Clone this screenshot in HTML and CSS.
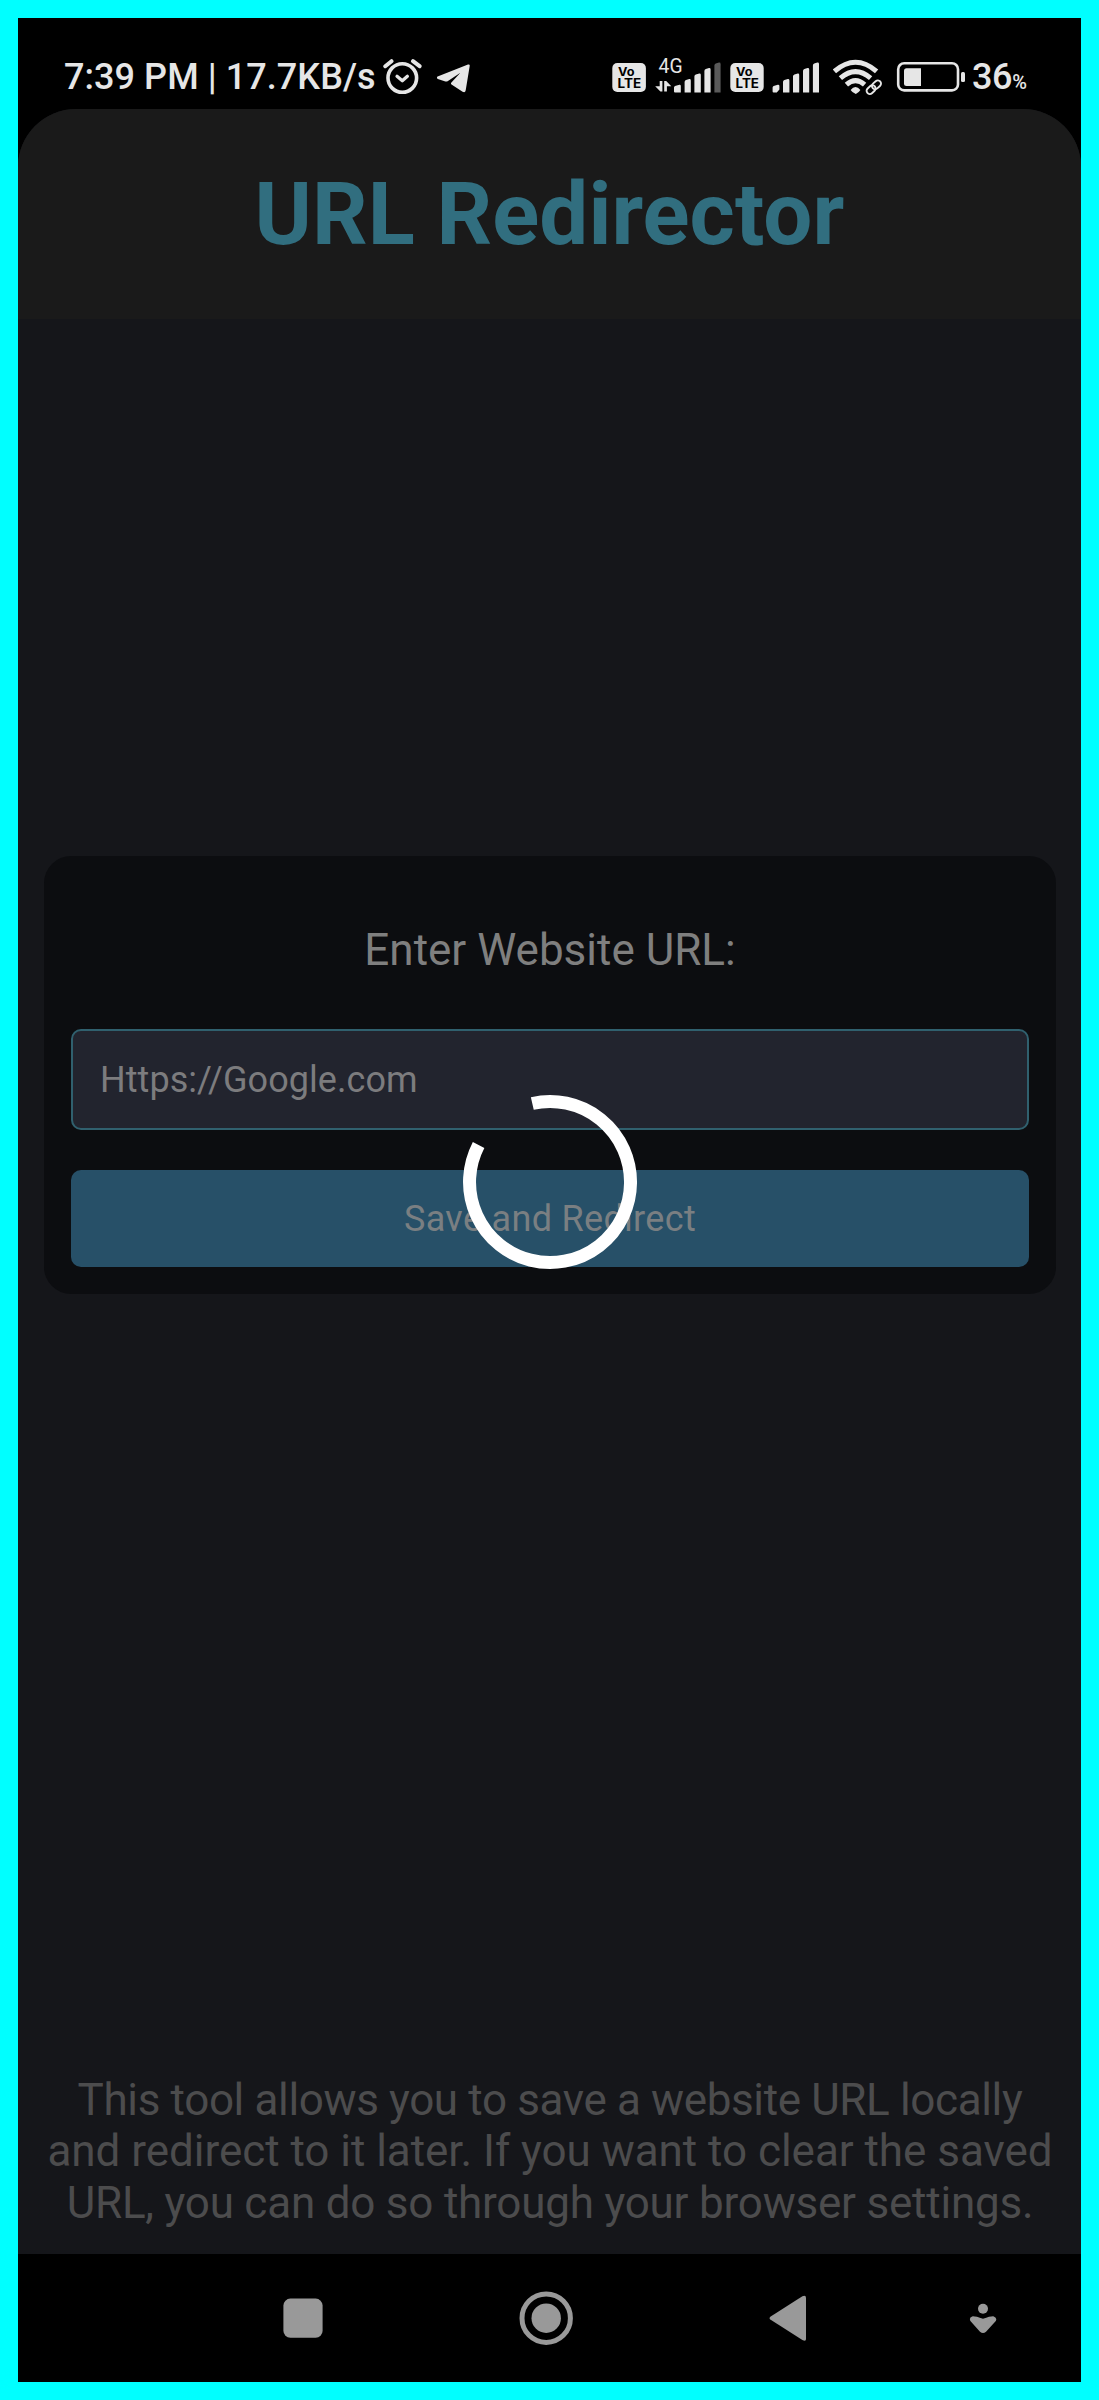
FILE: index.html
```html
<!DOCTYPE html>
<html lang="en">
<head>
<meta charset="utf-8">
<title>URL Redirector</title>
<link rel="stylesheet" href="styles.css">
</head>
<body>
<div class="screen">
  <div class="status">
    <div class="status-group">
      <span class="clock">7:39 PM | 17.7KB/s</span>
      <svg class="icon alarm" width="40" height="40" viewBox="382 56 40 40" fill="none" stroke="currentColor" stroke-linecap="round">
        <circle cx="402.3" cy="78" r="14.3" stroke-width="3.6"/>
        <path d="M385.3 66.2L391.5 61.2M413 61.2L419.6 66.2" stroke-width="4"/>
        <path d="M397 76.2L402.3 80.8L407.4 76.2" stroke-width="3.2" stroke-linejoin="round"/>
      </svg>
      <svg class="icon" width="34" height="40" viewBox="437 56 34 40" fill="currentColor">
        <path d="M437.6 76.6L468 64.6Q470 64 469.7 66L465.7 90.3Q465.2 93.2 462.6 91.8L451.5 84.6Q450.4 83.6 451.4 82.5L460.4 72.8L447.6 81.2Q446.6 81.8 445.4 81.4L437.8 79Q435.8 77.8 437.6 76.6Z"/>
      </svg>
    </div>
    <div class="status-group">
      <svg class="icon" width="34" height="40" viewBox="612 56 34 40">
        <rect x="612.3" y="63" width="33.6" height="29" rx="5" fill="currentColor"/>
        <text class="volte" x="618" y="75.8" font-size="11.5" textLength="16.5" lengthAdjust="spacingAndGlyphs">Vo</text>
        <text class="volte" x="617.6" y="88.3" font-size="13" textLength="23.6" lengthAdjust="spacingAndGlyphs">LTE</text>
      </svg>
      <svg class="icon signal-data" width="67" height="40" viewBox="655 56 67 40" fill="currentColor">
        <text class="network" x="658.6" y="72.7" font-size="19.5" textLength="24" lengthAdjust="spacingAndGlyphs">4G</text>
        <path d="M659.7 81H662.4V91.4H660.4L655.2 86.2H659.7ZM664.2 81H666.2L671.3 86.2H666.9V91.4H664.2Z"/>
        <path d="M674 87.5Q674 86.5 675 86L679.4 84.8Q680.8 84.6 680.8 86V92.5H675Q674 92.5 674 91.5ZM684.6 82Q684.6 80.6 686 80L689.3 79Q690.8 78.8 690.8 80.4V92.5H684.6ZM694.4 76.4Q694.4 75 695.8 74.5L699.3 73.4Q700.8 73.2 700.8 74.8V92.5H694.4ZM704.4 71Q704.4 69.6 705.8 69L709 68Q710.6 67.8 710.6 69.4V92.5H704.4Z"/>
        <path class="bar-off" d="M714.4 65.5Q714.4 64.2 715.8 63.6L719 62.6Q720.6 62.4 720.6 64V92.5H714.4Z"/>
      </svg>
      <svg class="icon" width="34" height="40" viewBox="729.6 56 34 40">
        <rect x="729.9" y="63" width="33.4" height="29" rx="5" fill="currentColor"/>
        <text class="volte" x="735.6" y="75.8" font-size="11.5" textLength="16.5" lengthAdjust="spacingAndGlyphs">Vo</text>
        <text class="volte" x="735.2" y="88.3" font-size="13" textLength="23.4" lengthAdjust="spacingAndGlyphs">LTE</text>
      </svg>
      <svg class="icon signal" width="48" height="40" viewBox="772 56 48 40" fill="currentColor">
        <path d="M772.6 87.5Q772.6 86.5 773.6 86L777.8 84.8Q779.4 84.6 779.4 86V89.6L776.8 92.5H773.6Q772.6 92.5 772.6 91.5ZM783 82Q783 80.6 784.4 80L787.8 79Q789.4 78.8 789.4 80.4V92.5H783ZM793 76.4Q793 75 794.4 74.5L797.8 73.4Q799.2 73.2 799.2 74.8V92.5H793ZM803 71Q803 69.6 804.4 69L807.6 68Q809.2 67.8 809.2 69.4V92.5H803ZM812.9 65.5Q812.9 64.2 814.2 63.6L817.4 62.6Q819 62.4 819 64V92.5H812.9Z"/>
      </svg>
      <svg class="icon wifi" width="50" height="40" viewBox="833 56 50 40" fill="none" stroke="currentColor">
        <path d="M834.4 71.3Q855.5 53.2 876.6 71.3M840.4 78.2Q855.5 65 870.6 78.2M846.4 84.6Q855.5 76.6 864.6 84.6" stroke-width="5"/>
        <path d="M850.6 90Q855.5 84 860.4 90Q859 92.4 855.8 94Q852 92.4 850.6 90Z" fill="currentColor" stroke="none"/>
        <g stroke-width="1.9" transform="rotate(-42 873.8 87.2)">
          <rect x="865.2" y="84" width="10" height="6.4" rx="3.2"/>
          <rect x="872.4" y="84" width="10" height="6.4" rx="3.2"/>
        </g>
      </svg>
      <svg class="icon battery" width="70" height="40" viewBox="896 56 70 40" fill="currentColor">
        <rect x="898.2" y="63.2" width="59.8" height="27.2" rx="6" fill="none" stroke="currentColor" stroke-width="2.6"/>
        <path d="M906.5 68.2H921V86H906.5Q904 86 904 83.5V70.7Q904 68.2 906.5 68.2Z"/>
        <rect x="961" y="72" width="4" height="10" rx="1.5"/>
      </svg>
      <span class="level">36<small class="percent">%</small></span>
    </div>
  </div>

  <div class="app">
    <header class="header"><h1 class="title">URL Redirector</h1></header>
    <main class="main">
      <form class="card">
        <label class="label" for="url">Enter Website URL:</label>
        <input class="field" id="url" type="text" placeholder="Https://Google.com">
        <button class="save" type="button">Save and Redirect</button>
      </form>
      <p class="note">
        <span class="line line-tight">This tool allows you to save a website URL locally</span>
        <span class="line">and redirect to it later. If you want to clear the saved</span>
        <span class="line line-snug">URL, you can do so through your browser settings.</span>
      </p>
    </main>
    <svg class="spinner" width="176" height="176" viewBox="-88 -88 176 176" fill="none" stroke="#fff" stroke-width="13">
      <path d="M-17.7 -78.5A80.5 80.5 0 1 1 -71.4 -37.1"/>
    </svg>
  </div>

  <nav class="nav">
    <svg width="40" height="60" viewBox="283 2288 40 60" fill="currentColor"><rect x="283.4" y="2298.6" width="39.2" height="39.2" rx="7"/></svg>
    <svg width="54" height="60" viewBox="519 2288 54 60"><circle cx="546.2" cy="2318.2" r="24.2" fill="none" stroke="currentColor" stroke-width="5"/><circle cx="546.2" cy="2318.2" r="14.7" fill="currentColor"/></svg>
    <svg width="38" height="60" viewBox="769 2288 38 60" fill="currentColor"><path d="M770.3 2316.8L802.4 2296.3Q806 2294.6 806 2298V2339Q806 2342 802.4 2340L770.3 2319.5Q768.8 2318.2 770.3 2316.8Z"/></svg>
    <svg width="28" height="60" viewBox="969 2288 28 60" fill="currentColor"><circle cx="983" cy="2308.8" r="5"/><path d="M972.2 2316.4Q975 2316 983 2318.8Q991 2316 993.8 2316.4Q997.4 2318 995.8 2321L986 2331.8Q983 2334.2 980 2331.8L970.4 2321Q968.8 2317.6 972.2 2316.4Z"/></svg>
  </nav>
</div>
</body>
</html>
```
FILE: styles.css
```css
* { box-sizing: border-box; }

body {
  margin: 0;
  background: #000;
  font-family: Roboto, sans-serif;
}

.screen {
  display: flex;
  flex-direction: column;
  height: 2400px;
  border: 18px solid #00ffff;
}

.status {
  display: flex;
  justify-content: space-between;
  height: 91px;
  padding: 38px 53px 0 46px;
  color: #e6e6e6;
}

.status-group {
  display: flex;
  align-items: flex-start;
  white-space: nowrap;
}

.icon { flex: none; display: block; }
.clock {
  width: 318px;
  font-size: 36px;
  font-weight: 500;
  letter-spacing: 0.06px;
  line-height: 43px;
}
.alarm { margin-right: 15px; }
.volte { font-family: Inter, sans-serif; font-weight: 700; fill: #000; }
.network { font-family: Roboto, sans-serif; }
.bar-off { fill: #5a5a5a; }
.signal-data { margin: 0 7.6px 0 9px; }
.signal { margin-left: 8.4px; }
.wifi { margin: 0 13px; }
.battery { margin-right: 6px; }
.level {
  width: 56px;
  font-size: 36px;
  font-weight: 500;
  letter-spacing: -0.4px;
  line-height: 43px;
}
.percent { font-size: 20px; }

.app {
  position: relative;
  display: flex;
  flex: 1;
  flex-direction: column;
  overflow: hidden;
  border-radius: 58px 58px 0 0;
  background: #15161a;
}

.header {
  height: 210px;
  padding-top: 54px;
  background: #1a1a1a;
  text-align: center;
}

.title {
  margin: 0;
  color: #316e7f;
  font-size: 87px;
  font-weight: 700;
  letter-spacing: 0.05px;
  line-height: 103px;
}

.main {
  display: flex;
  flex: 1;
  flex-direction: column;
  justify-content: space-between;
  padding: 537px 25px 25px 26px;
}

.card {
  display: flex;
  flex-direction: column;
  height: 438px;
  padding: 68px 27px 27px;
  border-radius: 27px;
  background: #0c0d10;
}

.label {
  height: 105px;
  color: #7f7f7f;
  font-size: 44px;
  line-height: 52px;
  text-align: center;
}

.field {
  height: 101px;
  padding: 0 27px;
  border: 2px solid #30606e;
  border-radius: 10px;
  background: #22242e;
  font: 36px/42px Roboto, sans-serif;
  letter-spacing: 0.06px;
}
.field::placeholder { color: #7c7c7e; opacity: 1; }

.save {
  height: 97px;
  margin-top: 40px;
  padding: 0;
  border: 0;
  border-radius: 10px;
  background: #275068;
  color: #7a7f82;
  font: 36px/42px Roboto, sans-serif;
  letter-spacing: 0.32px;
}

.note {
  margin: 0;
  color: #4c4c4d;
  font-size: 44px;
  line-height: 51.5px;
  text-align: center;
  white-space: nowrap;
}
.line { display: block; letter-spacing: -0.04px; }
.line-tight { letter-spacing: -0.37px; }
.line-snug { letter-spacing: -0.22px; }

.spinner {
  position: absolute;
  top: 985px;
  left: 444px;
}

.nav {
  display: grid;
  grid-template-columns: 236px 250px 200px auto;
  height: 128px;
  padding: 34px 0 0 265px;
  color: #999;
}
```
